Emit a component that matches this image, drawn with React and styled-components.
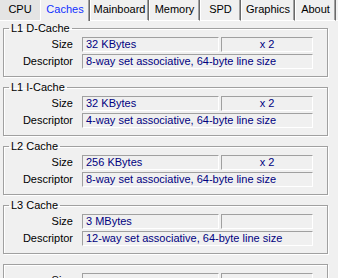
import React from "react";
import styled, { createGlobalStyle } from "styled-components";

const Global = createGlobalStyle`
  html, body { margin: 0; padding: 0; background: #f0f0f0; }
  body {
    width: 338px; height: 278px; overflow: hidden;
    font-family: "Liberation Sans", Arial, sans-serif;
    font-size: 11px; color: #000;
  }
`;

const Window = styled.div`
  width: 338px;
  height: 278px;
  background: #f0f0f0;
  overflow: hidden;
`;

const TabBar = styled.div`
  display: flex;
  height: 21px;
`;

const Tab = styled.div`
  box-sizing: border-box;
  width: ${(p) => p.$w}px;
  height: 21px;
  line-height: 19px;
  text-align: center;
  color: ${(p) => (p.$active ? "#1030ff" : "#000")};
  background: ${(p) => (p.$dim ? "#e4e4e4" : "#f0f0f0")};
  border-left: ${(p) => (p.$first ? "0" : "1px solid #fff")};
  border-right: ${(p) => (p.$first ? "0" : "1px solid #696969")};
  border-bottom: ${(p) => (p.$active ? "0" : "1px solid #fff")};
  box-shadow: ${(p) => (p.$first ? "none" : "inset -1px 0 0 #a0a0a0")};
  white-space: nowrap;
`;

const TabFill = styled.div`
  flex: 1;
  border-bottom: 1px solid #fff;
`;

const Panel = styled.div`
  padding: 0 10px 0 3px;
`;

const Group = styled.fieldset`
  box-sizing: border-box;
  width: 325px;
  margin: ${(p) => (p.$bare ? "10px" : "4px")} 0 0 0;
  &:first-child { margin-top: 1px; }
  padding: ${(p) => (p.$bare ? "8px" : "2px")} 14px 7px 0;
  border: 1px solid #a0a0a0;
  box-shadow: inset 1px 1px 0 #fff, 1px 1px 0 #fff;
  min-width: 0;
`;

const Legend = styled.legend`
  margin-left: 5px;
  padding: 0 2px;
  font-size: 11px;
  line-height: 13px;
  height: 13px;
  color: #000;
`;

const Rows = styled.div`
  display: grid;
  grid-template-columns: 78px 139px 92px;
  row-gap: 2px;
`;

const Label = styled.div`
  line-height: 15px;
  height: 15px;
  text-align: right;
  padding-right: 9px;
  grid-column: 1;
  white-space: nowrap;
`;

const Value = styled.div`
  box-sizing: border-box;
  height: 15px;
  line-height: 13px;
  border: 1px solid;
  border-color: #a0a0a0 #fff #fff #a0a0a0;
  color: #000080;
  padding: 0 3px;
  white-space: nowrap;
  overflow: hidden;
  text-align: ${(p) => (p.$center ? "center" : "left")};
  margin-right: ${(p) => p.$mr || 0}px;
  grid-column: ${(p) => p.$span || "auto"};
`;

const tabs = [
  { label: "CPU", w: 40, first: true, dim: true },
  { label: "Caches", w: 50, active: true },
  { label: "Mainboard", w: 59 },
  { label: "Memory", w: 51 },
  { label: "SPD", w: 41 },
  { label: "Graphics", w: 54 },
  { label: "About", w: 41 },
];

const caches = [
  { name: "L1 D-Cache", size: "32 KBytes", count: "x 2", desc: "8-way set associative, 64-byte line size" },
  { name: "L1 I-Cache", size: "32 KBytes", count: "x 2", desc: "4-way set associative, 64-byte line size" },
  { name: "L2 Cache", size: "256 KBytes", count: "x 2", desc: "8-way set associative, 64-byte line size" },
  { name: "L3 Cache", size: "3 MBytes", count: "", desc: "12-way set associative, 64-byte line size" },
  { name: "", size: "", count: "", desc: "" },
];

export default function App() {
  return (
    <Window>
      <Global />
      <TabBar>
        {tabs.map((t) => (
          <Tab key={t.label} $w={t.w} $active={t.active} $first={t.first} $dim={t.dim}>
            {t.label}
          </Tab>
        ))}
        <TabFill />
      </TabBar>
      <Panel>
        {caches.map((c, i) => (
          <Group key={i} $bare={!c.name}>
            {c.name && <Legend>{c.name}</Legend>}
            <Rows>
              <Label>Size</Label>
              <Value $mr={2}>{c.size}</Value>
              <Value $center>{c.count}</Value>
              <Label>Descriptor</Label>
              <Value $span="2 / 4">{c.desc}</Value>
            </Rows>
          </Group>
        ))}
      </Panel>
    </Window>
  );
}
